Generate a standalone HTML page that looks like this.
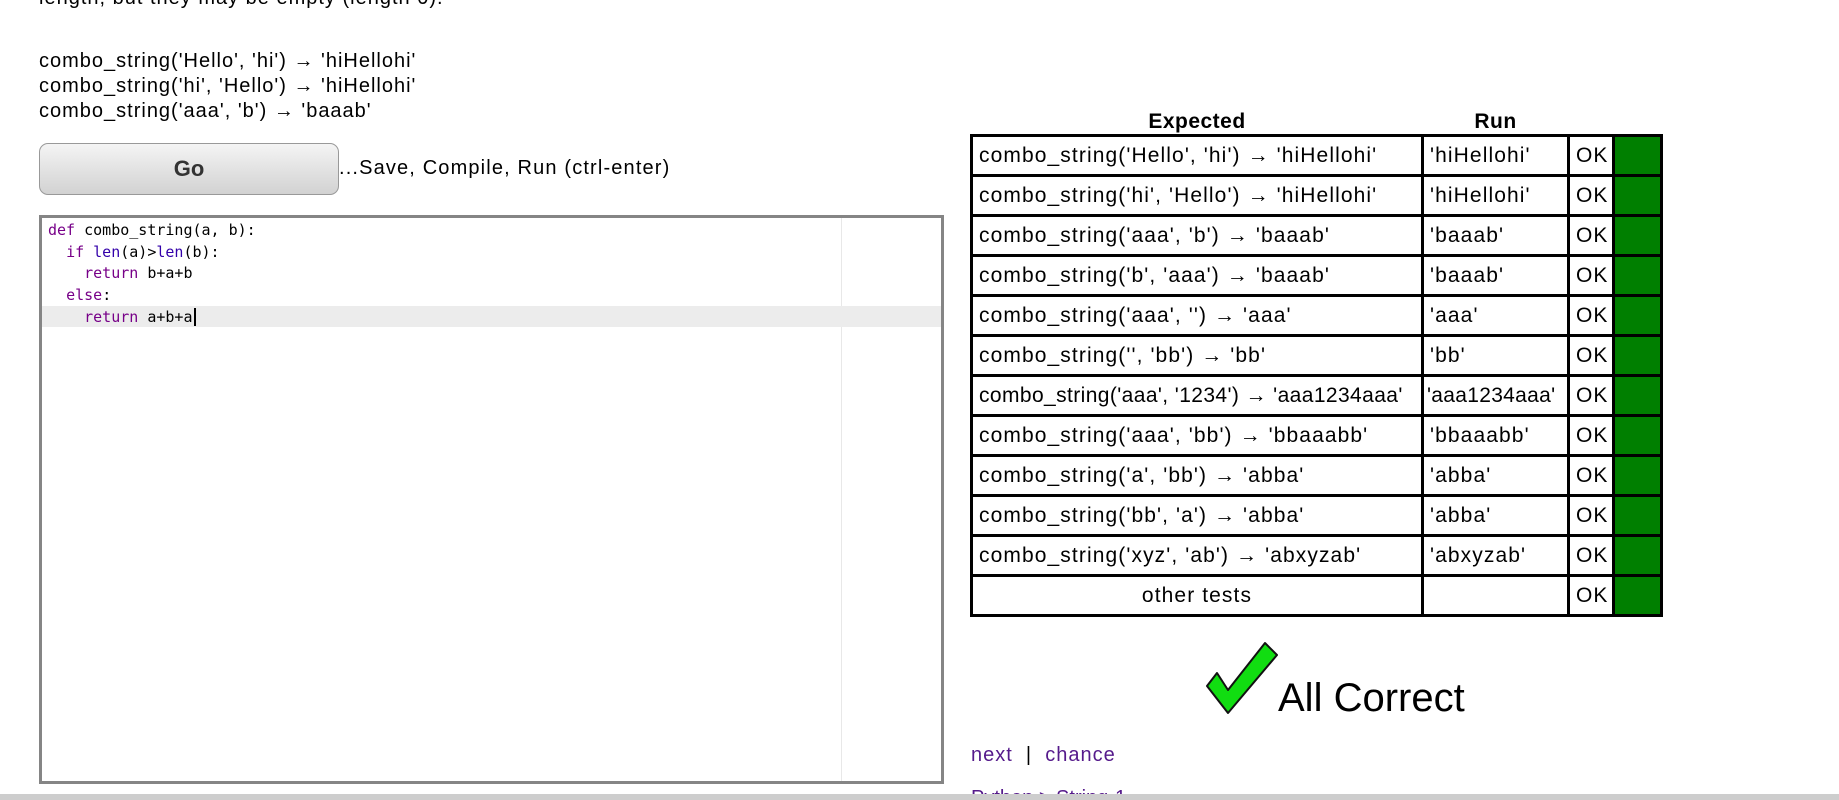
<!DOCTYPE html>
<html><head><meta charset="utf-8"><style>
html,body{margin:0;width:1839px;height:800px;overflow:hidden}
body{background:#fff;font-family:"Liberation Sans","DejaVu Sans",sans-serif;color:#000;position:relative}
.a{position:absolute;white-space:nowrap}
.ex{font-size:20px;line-height:25px;letter-spacing:1px}
.go{left:39px;top:143px;width:298px;height:50px;border:1px solid #999;border-radius:9px;background:linear-gradient(#f4f4f4,#d2d2d2);font-weight:bold;font-size:22px;color:#333;text-align:center;line-height:50px}
.ed{left:39px;top:215px;width:899px;height:563px;border:3px solid #858585}
.code{font-family:"DejaVu Sans Mono","Liberation Mono",monospace;font-size:15px;line-height:21.7px}
.k{color:#708}.b{color:#3300aa}
table{position:absolute;left:970px;top:109px;width:690px;border-collapse:collapse;font-size:21px;letter-spacing:1.1px;table-layout:fixed}
td{border:3px solid #000;height:37px;padding:0 6px;white-space:nowrap;overflow:hidden}
th{font-size:21px;height:25px;padding:0;letter-spacing:0.5px}
.g{background:#007f00;padding:0}
a{color:#551a8b;text-decoration:none}
</style></head><body>
<div class="a ex" style="left:39px;top:-14px">length, but they may be empty (length 0).</div>
<div class="a ex" style="left:39px;top:49px">combo_string('Hello', 'hi') → 'hiHellohi'<br>combo_string('hi', 'Hello') → 'hiHellohi'<br>combo_string('aaa', 'b') → 'baaab'</div>
<div class="a go">Go</div>
<div class="a" style="left:339px;top:157px;font-size:20px;letter-spacing:1.15px">...Save, Compile, Run (ctrl-enter)</div>
<div class="a ed">
<div style="position:absolute;left:799px;top:0;bottom:0;border-left:1px solid #e8e8e8"></div>
<div style="position:absolute;left:0;right:0;top:88px;height:21px;background:#ececec"></div>
<div class="code" style="position:absolute;left:6px;top:2px;color:#000">
<div><span class="k">def</span> combo_string(a, b):</div>
<div>&nbsp;&nbsp;<span class="k">if</span> <span class="b">len</span>(a)&gt;<span class="b">len</span>(b):</div>
<div>&nbsp;&nbsp;&nbsp;&nbsp;<span class="k">return</span> b+a+b</div>
<div>&nbsp;&nbsp;<span class="k">else</span>:</div>
<div>&nbsp;&nbsp;&nbsp;&nbsp;<span class="k">return</span> a+b+a<span style="border-left:2px solid #000;margin-left:1px"></span></div>
</div></div>
<table>
<colgroup><col style="width:451px"><col style="width:146px"><col style="width:45px"><col style="width:48px"></colgroup>
<tr><th style="border:0">Expected</th><th style="border:0">Run</th><th style="border:0"></th><th style="border:0"></th></tr>
<tr><td>combo_string('Hello', 'hi') → 'hiHellohi'</td><td>'hiHellohi'</td><td>OK</td><td class="g"></td></tr>
<tr><td>combo_string('hi', 'Hello') → 'hiHellohi'</td><td>'hiHellohi'</td><td>OK</td><td class="g"></td></tr>
<tr><td>combo_string('aaa', 'b') → 'baaab'</td><td>'baaab'</td><td>OK</td><td class="g"></td></tr>
<tr><td>combo_string('b', 'aaa') → 'baaab'</td><td>'baaab'</td><td>OK</td><td class="g"></td></tr>
<tr><td>combo_string('aaa', '') → 'aaa'</td><td>'aaa'</td><td>OK</td><td class="g"></td></tr>
<tr><td>combo_string('', 'bb') → 'bb'</td><td>'bb'</td><td>OK</td><td class="g"></td></tr>
<tr><td style="letter-spacing:0.4px">combo_string('aaa', '1234') → 'aaa1234aaa'</td><td style="letter-spacing:0.3px;padding:0 3px">'aaa1234aaa'</td><td>OK</td><td class="g"></td></tr>
<tr><td>combo_string('aaa', 'bb') → 'bbaaabb'</td><td>'bbaaabb'</td><td>OK</td><td class="g"></td></tr>
<tr><td>combo_string('a', 'bb') → 'abba'</td><td>'abba'</td><td>OK</td><td class="g"></td></tr>
<tr><td>combo_string('bb', 'a') → 'abba'</td><td>'abba'</td><td>OK</td><td class="g"></td></tr>
<tr><td>combo_string('xyz', 'ab') → 'abxyzab'</td><td>'abxyzab'</td><td>OK</td><td class="g"></td></tr>
<tr><td style="text-align:center">other tests</td><td></td><td>OK</td><td class="g"></td></tr>
</table>
<svg class="a" style="left:0;top:0" width="1839" height="800"><polygon points="1207,686 1217,673 1228,690 1265,643 1277,655 1228,713" fill="#11dd11" stroke="#111" stroke-width="2" stroke-linejoin="round"/></svg>
<div class="a" style="left:1278px;top:676px;font-size:40px">All Correct</div>
<div class="a" style="left:971px;top:744px;font-size:20px;letter-spacing:1px"><a>next</a> &nbsp;| &nbsp;<a>chance</a></div>
<div class="a" style="left:971px;top:787px;height:7px;overflow:hidden;font-size:20px"><a>Python &gt; String-1</a></div>
<div class="a" style="left:0;top:794px;width:1839px;height:6px;background:#cdcdcd"></div>
</body></html>
